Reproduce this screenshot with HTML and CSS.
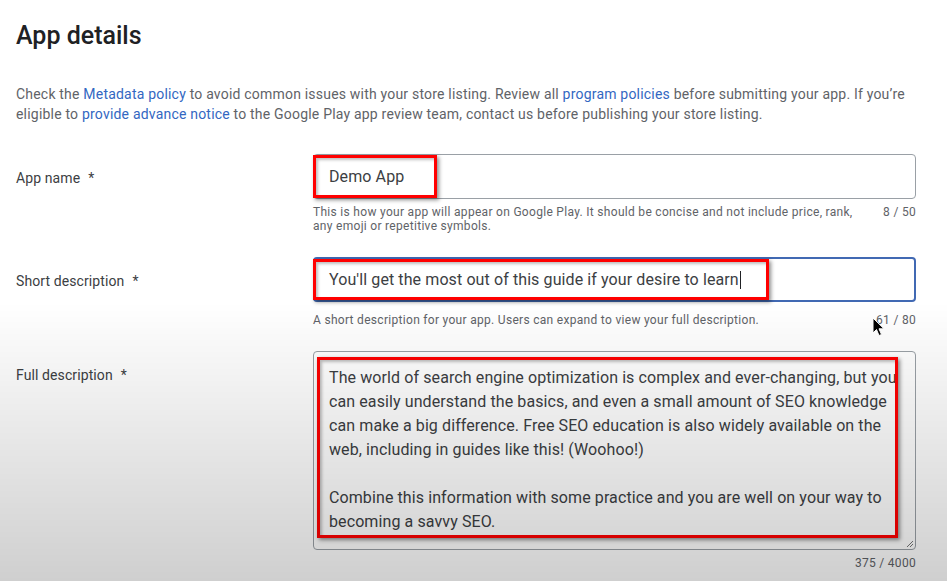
FILE: index.html
```html
<!DOCTYPE html>
<html>

<head>
  <meta charset="utf-8">

  <title>App details</title>

  <link rel="stylesheet" href="styles.css">
</head>

<body>
  <div class="page">
    <h1>App details</h1>

    <p class="intro">Check the <a href="#">Metadata policy</a> to avoid common issues with your store listing. Review all
      <a href="#">program policies</a> before submitting your app. If you’re eligible to <a href="#">provide advance
        notice</a> to the Google Play app review team, contact us before publishing your store listing.</p>

    <div class="field">
      <div class="label">App name<span class="req">*</span></div>
      <div class="control">
        <div class="box">
          <span class="mark mark-name">Demo App</span>
        </div>
        <div class="hint">
          <span class="hint-text">This is how your app will appear on Google Play. It should be concise and not include
            price, rank, any emoji or repetitive symbols.</span>
          <span class="count">8 / 50</span>
        </div>
      </div>
    </div>

    <div class="field">
      <div class="label">Short description<span class="req">*</span></div>
      <div class="control">
        <div class="box focused">
          <span class="mark mark-short">You'll get the most out of this guide if your desire to learn<span class="caret"></span></span>
        </div>
        <div class="hint single">
          <span class="hint-text">A short description for your app. Users can expand to view your full description.</span>
          <span class="count">61 / 80</span>
        </div>
      </div>
    </div>

    <div class="field">
      <div class="label">Full description<span class="req">*</span></div>
      <div class="control">
        <div class="box area">
          <div class="mark mark-full">
            <p>The world of search engine optimization is complex and ever-changing, but you can easily understand the
              basics, and even a small amount of SEO knowledge can make a big difference. Free SEO education is also
              widely available on the web, including in guides like this! (Woohoo!)</p>
            <p>Combine this information with some practice and you are well on your way to becoming a savvy SEO.</p>
          </div>
          <svg class="grip" width="8" height="8" viewBox="0 0 8 8">
            <path d="M1 7 L7 1 M4 7 L7 4" stroke="#777" stroke-width="1" fill="none"/>
          </svg>
        </div>
        <div class="hint">
          <span class="hint-text"></span>
          <span class="count">375 / 4000</span>
        </div>
      </div>
    </div>
  </div>

  <svg class="pointer" width="14" height="21" viewBox="0 0 14 21">
    <path d="M1 1 L1 16 L4.5 12.5 L7 18.5 L9.5 17.5 L7 11.8 L12 11.8 Z" fill="#000" stroke="#fff" stroke-width="1"/>
  </svg>

  <div class="shade"></div>
</body>

</html>
```

FILE: styles.css
```css
* {
  box-sizing: border-box;
}

body {
  margin: 0;
  background: #fff;
  font-family: Roboto, "Liberation Sans", sans-serif;
  color: #3c4043;
}

.page {
  padding: 0 16px;
}

h1 {
  margin: 0;
  padding-top: 20px;
  font-size: 25px;
  line-height: 32px;
  font-weight: 500;
  color: #202124;
}

.intro {
  margin: 32px 0 30px;
  font-size: 14px;
  line-height: 20px;
  color: #5f6368;
  letter-spacing: 0.2px;
}

.intro a {
  color: #3367c2;
  text-decoration: none;
}

.field {
  display: grid;
  grid-template-columns: 297px 603px;
  margin-bottom: 24px;
}

.label {
  padding-top: 14px;
  font-size: 14px;
  line-height: 20px;
  color: #3c4043;
  letter-spacing: 0.1px;
}

.req {
  margin-left: 8px;
}

.box {
  position: relative;
  height: 45px;
  border: 1px solid #9aa0a6;
  border-radius: 4px;
  display: flex;
}

.box.focused {
  border: 2px solid #4169b3;
}

.box.area {
  height: 199px;
}

.mark {
  border: 3px solid #f00;
  box-shadow: 2px 2px 4px rgba(0, 0, 0, 0.45), inset 2px 2px 3px rgba(0, 0, 0, 0.25);
  font-size: 16px;
  color: #3c4043;
  letter-spacing: 0.1px;
}

.mark-name {
  width: 124px;
  margin-left: -1px;
  padding-left: 13px;
  line-height: 37px;
}

.mark-short {
  width: 456px;
  margin-left: -2px;
  padding-left: 13px;
  line-height: 35px;
}

.caret {
  display: inline-block;
  width: 1px;
  height: 18px;
  margin-left: 1px;
  vertical-align: -4px;
  background: #202124;
}

.mark-full {
  width: 581px;
  height: 181px;
  margin: 5px 0 0 3px;
  padding: 6px 0 0 9px;
  line-height: 24px;
  overflow: hidden;
}

.mark-full p {
  margin: 0 0 24px;
  width: 580px;
}

.grip {
  position: absolute;
  right: 1px;
  bottom: 1px;
}

.hint {
  display: flex;
  justify-content: space-between;
  margin-top: 6px;
  font-size: 12px;
  line-height: 14px;
  color: #5f6368;
  letter-spacing: 0.3px;
}

.hint.single {
  margin-top: 11px;
}

.hint-text {
  max-width: 550px;
}

.count {
  white-space: nowrap;
}

.pointer {
  position: absolute;
  left: 872px;
  top: 317px;
}

.shade {
  position: fixed;
  top: 0;
  left: 0;
  right: 0;
  bottom: 0;
  pointer-events: none;
  background: linear-gradient(to bottom, rgba(0, 0, 0, 0) 0, rgba(0, 0, 0, 0) 52%, rgba(0, 0, 0, 0.19) 100%);
}
```
